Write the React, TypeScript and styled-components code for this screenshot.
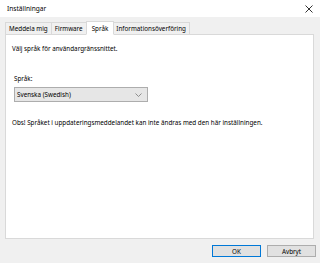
import styled, { createGlobalStyle } from 'styled-components';

const GlobalStyle = createGlobalStyle`
	html, body {
		margin: 0;
		padding: 0;
		background: #f0f0f0;
	}
	* {
		box-sizing: border-box;
	}
`;

const tabs = ['Meddela mig', 'Firmware', 'Språk', 'Informationsöverföring'];
const activeTab = 'Språk';

const App = () => {
	return (
		<>
			<GlobalStyle />
			<StyledWindow>
				<StyledTitleBar>
					<StyledTitle>Inställningar</StyledTitle>
					<StyledClose aria-label="Stäng">
						<svg width="8" height="8" viewBox="0 0 8 8">
							<path d="M0.5 0.5 L7.5 7.5 M7.5 0.5 L0.5 7.5" stroke="#333" strokeWidth="1" />
						</svg>
					</StyledClose>
				</StyledTitleBar>
				<StyledBody>
					<StyledTabStrip>
						{tabs.map((tab) => (
							<StyledTab key={tab} $active={tab === activeTab}>
								{tab}
							</StyledTab>
						))}
					</StyledTabStrip>
					<StyledPanel>
						<StyledText>Välj språk för användargränssnittet.</StyledText>
						<StyledField>
							<StyledLabel>Språk:</StyledLabel>
							<StyledSelect>
								<span>Svenska (Swedish)</span>
								<svg width="7" height="4" viewBox="0 0 7 4">
									<path d="M0.5 0.5 L3.5 3.5 L6.5 0.5" stroke="#777" strokeWidth="0.8" fill="none" />
								</svg>
							</StyledSelect>
						</StyledField>
						<StyledNote>Obs! Språket i uppdateringsmeddelandet kan inte ändras med den här inställningen.</StyledNote>
					</StyledPanel>
					<StyledFooter>
						<StyledButton $primary>OK</StyledButton>
						<StyledButton>Avbryt</StyledButton>
					</StyledFooter>
				</StyledBody>
			</StyledWindow>
		</>
	);
};

export default App;

const StyledWindow = styled.div`
	width: 320px;
	height: 263px;
	display: flex;
	flex-direction: column;
	background: #f0f0f0;
	font-family: 'Noto Sans', 'Open Sans', sans-serif;
	font-size: 6.3px;
	color: #000;
`;
const StyledTitleBar = styled.div`
	height: 17px;
	background: #fff;
	display: flex;
	align-items: center;
	justify-content: space-between;
	padding: 0 5px 0 7px;
`;
const StyledTitle = styled.span`
	font-size: 6.6px;
`;
const StyledClose = styled.div`
	width: 12px;
	height: 12px;
	display: flex;
	align-items: center;
	justify-content: center;
`;
const StyledBody = styled.div`
	flex: 1;
	display: flex;
	flex-direction: column;
	padding: 5px 6px 0 5px;
`;
const StyledTabStrip = styled.div`
	display: flex;
	align-items: flex-end;
	height: 13px;
	position: relative;
	z-index: 1;
	margin-bottom: -1px;
`;
const StyledTab = styled.div<{ $active?: boolean }>`
	height: ${(p) => (p.$active ? '14px' : '13px')};
	padding: 0 ${(p) => (p.$active ? '5px' : '3px')};
	margin: 0 ${(p) => (p.$active ? '-1px' : '0')};
	display: flex;
	align-items: center;
	background: ${(p) => (p.$active ? '#fff' : '#f0f0f0')};
	border: 1px solid #d9d9d9;
	border-bottom: ${(p) => (p.$active ? '1px solid #fff' : '1px solid #d9d9d9')};
	border-left-width: ${(p) => (p.$active ? '1px' : '0')};
	white-space: nowrap;
	position: relative;
	z-index: ${(p) => (p.$active ? 2 : 1)};
	&:first-child {
		border-left-width: 1px;
	}
`;
const StyledPanel = styled.div`
	height: 205px;
	background: #fff;
	border: 1px solid #d9d9d9;
	padding: 9px 6px;
	display: flex;
	flex-direction: column;
`;
const StyledText = styled.div`
	line-height: 9px;
`;
const StyledField = styled.div`
	margin-top: 21px;
	padding-left: 2px;
	display: flex;
	flex-direction: column;
	gap: 4px;
`;
const StyledLabel = styled.div`
	line-height: 9px;
`;
const StyledSelect = styled.div`
	width: 134px;
	height: 15px;
	background: #e6e6e6;
	border: 1px solid #adadad;
	display: flex;
	align-items: center;
	justify-content: space-between;
	padding: 0 5px 0 2px;
`;
const StyledNote = styled.div`
	margin-top: 16px;
	line-height: 9px;
`;
const StyledFooter = styled.div`
	display: flex;
	justify-content: flex-end;
	gap: 6px;
	padding-top: 6px;
	margin-right: -2px;
`;
const StyledButton = styled.div<{ $primary?: boolean }>`
	width: 49px;
	height: 12px;
	display: flex;
	align-items: center;
	justify-content: center;
	background: #e1e1e1;
	border: 1px solid ${(p) => (p.$primary ? '#0078d7' : '#adadad')};
`;
